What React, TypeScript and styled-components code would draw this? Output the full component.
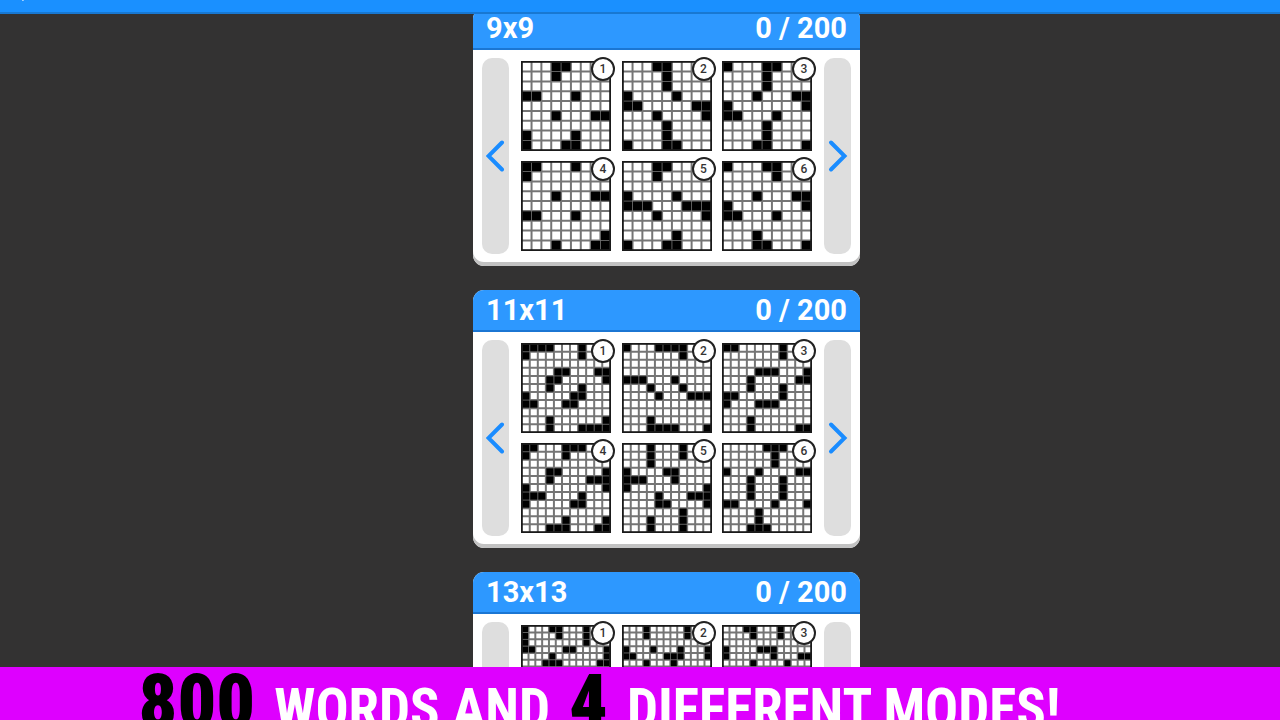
import React from "react";
import styled, { createGlobalStyle } from "styled-components";

const GlobalStyle = createGlobalStyle`
  *, *::before, *::after { box-sizing: border-box; }
  html, body { margin: 0; padding: 0; }
  body { background: #333232; font-family: Roboto, "Liberation Sans", sans-serif; }
  button { font: inherit; border: 0; padding: 0; margin: 0; background: none; cursor: pointer; }
`;

const Screen = styled.div`
  display: flex;
  flex-direction: column;
  height: 100vh;
  overflow: hidden;
  background: #333232;
`;

const TopBar = styled.header`
  position: relative;
  z-index: 2;
  display: flex;
  align-items: flex-end;
  flex: none;
  height: 14px;
  padding-left: 8px;
  background: #1a90ff;
  border-bottom: 2px solid #1878d2;
`;

const BackButton = styled.button`
  display: flex;
  align-items: flex-end;
  height: 40px;
  padding-bottom: 10px;
  color: #fff;
`;

const PackList = styled.main`
  display: flex;
  flex-direction: column;
  align-items: center;
  gap: 24px;
  flex: 1;
  min-height: 0;
  margin-top: -6px;
  padding-left: 53px;
  overflow: hidden;
`;

const Card = styled.section`
  flex: none;
  width: 387px;
  border-radius: 11px;
  overflow: hidden;
  background: #fff;
  box-shadow: inset 0 -4px #c2c2c2;
`;

const CardHeader = styled.div`
  display: flex;
  justify-content: space-between;
  align-items: center;
  height: 42px;
  padding: 0 13px;
  background: #2d98ff;
  border-bottom: 2px solid #1b76d3;
  color: #fff;
`;

const Title = styled.h2`
  margin: 0;
  font-size: 29px;
  line-height: 40px;
  font-weight: 700;
`;

const Progress = styled.span`
  font-size: 29px;
  line-height: 40px;
  font-weight: 700;
`;

const CardBody = styled.div`
  display: flex;
  gap: 12px;
  padding: 8px 9px 12px;
`;

const PagerButton = styled.button`
  display: flex;
  align-items: center;
  justify-content: center;
  flex: none;
  width: 27px;
  border-radius: 10px;
  background: #dedede;
  color: #1a8cff;
`;

const PuzzleGrid = styled.div`
  flex: 1;
  display: grid;
  grid-template-columns: repeat(3, 90px);
  grid-auto-rows: 90px;
  justify-content: space-between;
  row-gap: 10px;
  min-height: 196px;
  padding: 3px 0;
`;

const PuzzleButton = styled.button`
  position: relative;
  display: block;
  width: 90px;
  height: 90px;
  background: #fff;
`;

const Badge = styled.span`
  position: absolute;
  top: -4px;
  right: -4px;
  display: flex;
  align-items: center;
  justify-content: center;
  width: 24px;
  height: 24px;
  border: 2px solid #222;
  border-radius: 50%;
  background: #fff;
  color: #333;
  font-size: 12px;
  line-height: 20px;
  font-weight: 500;
`;

const Banner = styled.footer`
  position: relative;
  z-index: 1;
  flex: none;
  height: 53px;
  overflow: hidden;
  background: #de00ff;
`;

const Slogan = styled.p`
  display: flex;
  justify-content: center;
  align-items: baseline;
  gap: 19px;
  margin: 0;
  padding-right: 81px;
  font-family: "Roboto Condensed", "Liberation Sans Narrow", "Liberation Sans", sans-serif;
  font-weight: 700;
  line-height: 70px;
  white-space: nowrap;
`;

const Figure = styled.strong`
  font-size: 76px;
  color: #000;
`;

const Words = styled.span`
  font-size: 55px;
  color: #fff;
`;

// Each puzzle lists its rows from top to bottom; the numbers are the columns of the black cells.
type Puzzle = number[][];

type Pack = { size: number; puzzles: Puzzle[] };

const packs: Pack[] = [
  {
    size: 9,
    puzzles: [
      [[3, 4], [3], [], [0, 1, 5], [], [3, 7, 8], [], [0, 5], [0, 4, 5]],
      [[3, 4], [4], [4], [0, 5], [0, 1, 7, 8], [3, 8], [4], [4], [0, 4, 5]],
      [[0, 4, 5], [4], [4], [3, 7, 8], [0, 8], [0, 1, 5], [4], [4], [3, 4, 8]],
      [[0, 1, 5], [0], [], [3, 7, 8], [], [0, 1, 5], [], [8], [3, 7, 8]],
      [[3, 4], [3], [], [0, 5], [0, 1, 2, 6, 7, 8], [3, 8], [], [5], [0, 4, 5]],
      [[0, 4, 5], [5], [], [3, 7, 8], [0, 8], [0, 1, 5], [], [3], [3, 4, 8]],
    ],
  },
  {
    size: 11,
    puzzles: [
      [[0, 1, 2, 3, 7], [0, 7], [], [4, 5, 9, 10], [3, 4, 10], [3, 7], [0, 6, 7], [0, 1, 5, 6], [], [3, 10], [3, 7, 8, 9, 10]],
      [[0, 4, 5, 6, 7], [7], [], [], [0, 1, 2, 6], [3, 7], [4, 8, 9, 10], [], [], [3], [3, 4, 5, 6, 10]],
      [[0, 1, 7], [7], [], [4, 5, 6, 10], [3, 9, 10], [3, 7], [0, 1, 7], [0, 4, 5, 6], [], [3], [3, 9, 10]],
      [[0, 1, 5, 6, 7], [0, 5], [], [3, 4, 10], [3, 8, 9, 10], [0, 10], [0, 1, 2, 7], [0, 6, 7], [], [5, 10], [3, 4, 5, 9, 10]],
      [[3, 7], [3, 7], [3], [0, 5, 6], [0, 1, 2, 6], [0, 10], [4, 8, 9, 10], [4, 5, 10], [7], [3, 7], [3, 7]],
      [[5, 6, 7], [6], [6], [0, 4, 9, 10], [3, 7], [3, 7], [3, 7], [0, 1, 6, 10], [4], [4], [3, 4, 5]],
    ],
  },
  {
    size: 13,
    puzzles: [
      [[0, 4, 5, 9], [0, 5, 9], [0, 9], [0, 1, 6, 7, 12], [4, 12], [3, 4, 5, 11, 12]],
      [[3, 9], [3, 9], [], [0, 4, 8, 12], [0, 1, 6, 7, 8, 12], [3, 7]],
      [[3, 4, 8], [4, 8], [], [0, 5, 6, 7], [0, 7, 11, 12], [4, 9]],
    ],
  },
];

function Board({ size, puzzle }: { size: number; puzzle: Puzzle }) {
  const step = 88.6 / size;
  const at = (i: number) => 0.7 + i * step;
  const lines = Array.from({ length: size - 1 }, (_, i) => at(i + 1));
  return (
    <svg width="90" height="90" viewBox="0 0 90 90" aria-hidden="true" display="block">
      <rect width="90" height="90" fill="#fff" />
      {lines.map((p) => (
        <path key={p} d={`M${p} 0V90M0 ${p}H90`} stroke="#757575" strokeWidth="2" />
      ))}
      {puzzle.map((cols, r) =>
        cols.map((c) => (
          <rect key={`${r}-${c}`} x={at(c) + 0.4} y={at(r) + 0.4} width={step - 0.8} height={step - 0.8} fill="#000" />
        ))
      )}
      <rect x="0.9" y="0.9" width="88.2" height="88.2" fill="none" stroke="#1a1a1a" strokeWidth="1.8" />
    </svg>
  );
}

function Chevron({ flip }: { flip?: boolean }) {
  return (
    <svg width="20" height="34" viewBox="0 0 20 34" fill="none" aria-hidden="true">
      <path
        d={flip ? "M3 3.500L16.500 17L3 30.500" : "M16 3.500L2.500 17L16 30.500"}
        stroke="currentColor"
        strokeWidth="4"
        strokeLinecap="round"
      />
    </svg>
  );
}

function PackCard({ pack }: { pack: Pack }) {
  return (
    <Card>
      <CardHeader>
        <Title>{`${pack.size}x${pack.size}`}</Title>
        <Progress>0 / 200</Progress>
      </CardHeader>
      <CardBody>
        <PagerButton aria-label="Previous puzzles">
          <Chevron />
        </PagerButton>
        <PuzzleGrid>
          {pack.puzzles.map((puzzle, i) => (
            <PuzzleButton key={i}>
              <Board size={pack.size} puzzle={puzzle} />
              <Badge>{i + 1}</Badge>
            </PuzzleButton>
          ))}
        </PuzzleGrid>
        <PagerButton aria-label="Next puzzles">
          <Chevron flip />
        </PagerButton>
      </CardBody>
    </Card>
  );
}

export default function App() {
  return (
    <>
      <GlobalStyle />
      <Screen>
        <TopBar>
          <BackButton aria-label="Back">
            <svg width="32" height="28" viewBox="0 0 32 28" fill="none" aria-hidden="true">
              <path d="M16 2L4 14L16 26M4 14H30" stroke="currentColor" strokeWidth="3" />
            </svg>
          </BackButton>
        </TopBar>
        <PackList>
          {packs.map((pack) => (
            <PackCard key={pack.size} pack={pack} />
          ))}
        </PackList>
        <Banner>
          <Slogan>
            <Figure>800</Figure>
            <Words>WORDS AND</Words>
            <Figure>4</Figure>
            <Words>DIFFERENT MODES!</Words>
          </Slogan>
        </Banner>
      </Screen>
    </>
  );
}
